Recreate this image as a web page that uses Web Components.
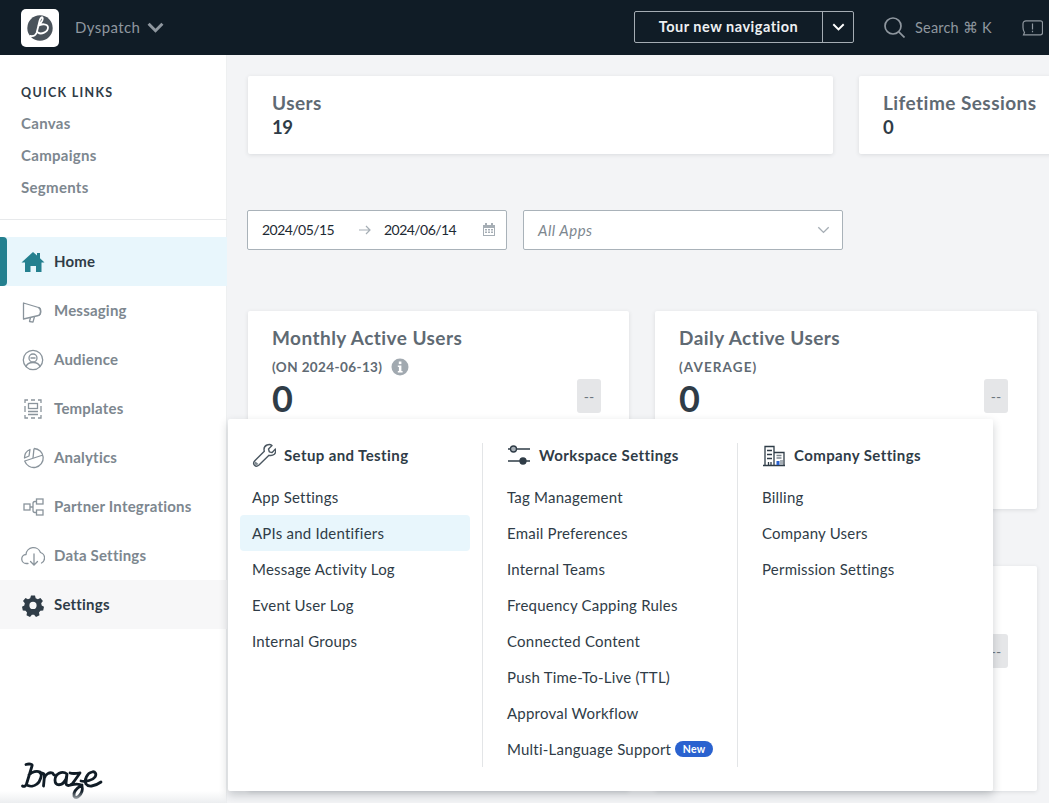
<!DOCTYPE html>
<html lang="en"><head><meta charset="utf-8"><title>Braze</title>
<style>
html,body{margin:0;height:100%;overflow:hidden}
body{font-family:Lato,"Noto Sans",sans-serif;color:#2f3c47;background:#f3f4f6;width:1049px;height:803px;position:relative;display:grid;grid-template-rows:55px 1fr;grid-template-columns:227px 1fr}
bz-topbar{grid-column:1/3}
</style></head><body>
<bz-topbar></bz-topbar>
<bz-sidebar>
  <bz-nav-item icon="home" active>Home</bz-nav-item>
  <bz-nav-item icon="messaging">Messaging</bz-nav-item>
  <bz-nav-item icon="audience">Audience</bz-nav-item>
  <bz-nav-item icon="templates">Templates</bz-nav-item>
  <bz-nav-item icon="analytics">Analytics</bz-nav-item>
  <bz-nav-item icon="partner">Partner Integrations</bz-nav-item>
  <bz-nav-item icon="data">Data Settings</bz-nav-item>
  <bz-nav-item icon="settings" open>Settings</bz-nav-item>
</bz-sidebar>
<bz-dashboard></bz-dashboard>
<bz-settings-menu>
  <bz-menu-col icon="wrench" heading="Setup and Testing">
    <bz-menu-link>App Settings</bz-menu-link>
    <bz-menu-link selected>APIs and Identifiers</bz-menu-link>
    <bz-menu-link>Message Activity Log</bz-menu-link>
    <bz-menu-link>Event User Log</bz-menu-link>
    <bz-menu-link>Internal Groups</bz-menu-link>
  </bz-menu-col>
  <bz-menu-col icon="sliders" heading="Workspace Settings">
    <bz-menu-link>Tag Management</bz-menu-link>
    <bz-menu-link>Email Preferences</bz-menu-link>
    <bz-menu-link>Internal Teams</bz-menu-link>
    <bz-menu-link>Frequency Capping Rules</bz-menu-link>
    <bz-menu-link>Connected Content</bz-menu-link>
    <bz-menu-link>Push Time-To-Live (TTL)</bz-menu-link>
    <bz-menu-link>Approval Workflow</bz-menu-link>
    <bz-menu-link>Multi-Language Support<bz-badge>New</bz-badge></bz-menu-link>
  </bz-menu-col>
  <bz-menu-col icon="company" heading="Company Settings">
    <bz-menu-link>Billing</bz-menu-link>
    <bz-menu-link>Company Users</bz-menu-link>
    <bz-menu-link>Permission Settings</bz-menu-link>
  </bz-menu-col>
</bz-settings-menu>

<script>
const ICONS={
home:'<path d="M.5 12.500 12 2l4 3.600V3h3v5.300l4.500 4.200H20.500V22H15v-6H9.500v6H4V12.500z" fill="#24808f"/>',
messaging:'<g fill="none" stroke="#8a949c" stroke-width="1.300" stroke-linejoin="round"><path d="M2.500 4l15 4.500c3 .8 3 7 0 8l-15 3.500z"/><path d="M17.500 8.500c2.700 1 2.700 7 0 8M9.500 18.500l-1 4 3.500.7 1.500-5.700"/></g>',
audience:'<g fill="none" stroke="#8a949c" stroke-width="1.300"><circle cx="12" cy="12" r="9.700"/><circle cx="12" cy="10" r="4"/><path d="M5 19c1-4 4-4.500 7-4.500s6 .5 7 4.500M9.500 10h5"/></g>',
templates:'<g fill="none" stroke="#8a949c" stroke-width="1.300"><path d="M4 6V3h3M10 3h4M17 3h3v3M4 9v6M20 9v6M4 18v3h3M10 21h4M17 21h3v-3"/><rect x="7.500" y="6.500" width="9" height="5"/><path d="M7 14.500h10M7 17.500h10"/></g>',
analytics:'<g fill="none" stroke="#8a949c" stroke-width="1.300" stroke-linejoin="round"><path d="M13 2.500A9.500 9.500 0 1 1 3.700 15L22 9"/><path d="M13 2.500 12 12"/><path d="M9 3.500 8 10l-4.500 2C3.500 8 5.500 5 9 3.500z"/></g>',
partner:'<g fill="none" stroke="#8a949c" stroke-width="1.300"><rect x="3" y="9" width="6" height="6"/><rect x="15.500" y="4" width="6.500" height="5"/><rect x="15.500" y="15" width="6.500" height="5"/><path d="M9 12h3M15.500 6.500H14a2 2 0 0 0-2 2v7a2 2 0 0 0 2 2h1.500"/></g>',
data:'<g fill="none" stroke="#8a949c" stroke-width="1.300" stroke-linecap="round"><path d="M7 19.500H5.500a4.500 4.500 0 0 1-.5-9 7.500 7.500 0 0 1 14.500-2 5.700 5.700 0 0 1 1 10.500"/><path d="M13 10v10.500M9.500 17.500l3.500 3.500 3.500-3.500"/></g>',
settings:'<path fill-rule="evenodd" d="M10 2.500h4l.7 2.700 2.200 1 2.500-1.300 2.500 3-1.700 2.300.5 2.300 2.300 1.300-.8 3.700-2.800.2-1.400 1.800.5 2.800-3.500 1.600-1.900-2.100h-2.200l-1.900 2.100-3.500-1.600.5-2.800-1.400-1.800-2.800-.2-.8-3.700 2.300-1.300.5-2.300L2 7.900l2.500-3 2.500 1.300 2.200-1zM12 8.800a3.600 3.600 0 1 0 0 7.200 3.600 3.600 0 0 0 0-7.200z" fill="#2f3c47"/>',
wrench:'<path fill="none" stroke="#4b5761" stroke-width="1.400" stroke-linejoin="round" d="M15 2c2-.7 4-.3 5 .5l-3.500 3.500.8 2.800 2.800.8L23.500 6c.6 2.500.2 4-1.200 5.300-1.500 1.300-3.500 1.500-5.300 1L7 22c-1.500 1.300-3.500 1.300-4.500.2-1.200-1.200-1-3 .3-4.400l9.500-9.500c-.8-3 .3-5.300 2.700-6.300z"/><path fill="#7d878f" d="M3.500 18.500l3 2.500c-1.500 1.300-3 1.200-3.800.2-.6-.8-.2-1.900.8-2.700z"/>',
sliders:'<g stroke="#2f3c47" stroke-width="1.300"><path d="M1 6h2.500M9.500 6H23M1 18h12M19 18h4"/><circle cx="6.500" cy="6" r="3" fill="#a6aeb5"/><circle cx="16" cy="18" r="3" fill="#2f3c47"/></g>',
company:'<g fill="none" stroke="#2f3c47" stroke-width="1.300"><path d="M1 22.500h22M3 22V3.500h9V22"/><path d="M12 9.500h10V22"/><path d="M5 7.500h5M5 11.500h5M5 15.500h5"/><path d="M14.500 12.500h5M14.500 15h5" stroke="#7d878f"/><path d="M6.500 22v-3M9 22v-3"/></g><rect x="14.500" y="18" width="3" height="4" fill="#2a62cf"/><rect x="18" y="17" width="3" height="5" fill="#a6aeb5"/>'
};
function def(name,html,setup){
  customElements.define(name,class extends HTMLElement{
    constructor(){super();this.attachShadow({mode:'open'}).innerHTML=html;}
    connectedCallback(){if(setup)setup(this,this.shadowRoot);}
  });
}
const chev=(w,h,c,sw)=>`<svg width="${w}" height="${h}" viewBox="0 0 16 10" fill="none" stroke="${c}" stroke-width="${sw}"><path d="M1.500 1.500 8 8l6.500-6.500"/></svg>`;

def('bz-topbar',`<style>
:host{display:flex;align-items:center;background:#101c26;height:55px;overflow:hidden;font-size:15px;box-sizing:border-box;padding-left:21px}
.logo{width:38px;height:38px;background:#fff;border-radius:5px;display:flex;align-items:center;justify-content:center;flex:none}
.name{margin-left:16px;margin-bottom:1px;color:#8f979f;font-size:15px;letter-spacing:.4px}
.caret{margin-left:7px;display:flex}
.split{margin-left:auto;margin-bottom:1px;display:flex;height:32px;box-sizing:border-box;border:1px solid #a4acb3;border-radius:2px;width:220px;color:#fff}
.tour{flex:1;display:flex;align-items:center;justify-content:center;font-weight:700;font-size:14.500px;letter-spacing:.5px;color:#eef0f2;padding-bottom:1px;box-sizing:border-box}
.more{width:30px;border-left:1px solid #a4acb3;display:flex;align-items:center;justify-content:center}
.search{margin-left:30px;display:flex;align-items:center;color:#8f979f;width:108px;flex:none}
.search span{margin-left:10px;font-size:14.500px;letter-spacing:.2px;white-space:nowrap}
.fb{margin-left:30px;margin-right:6px;display:flex;flex:none;margin-top:1px}
</style>
<div class="logo"><svg width="30" height="30" viewBox="0 0 30 30"><circle cx="15" cy="15" r="12.700" fill="#4a535b"/><path d="M5.500 23c3 .5 5-.5 6-3 1-3 2-8 3-12 .5-2 2-4.500 3-3.500 1 1.500-1 5-4.500 8.500 3-2.500 10-2.500 10 1.500 0 4.500-7 7.500-10 5" fill="none" stroke="#fff" stroke-width="1.800" stroke-linecap="round"/></svg></div>
<div class="name">Dyspatch</div>
<div class="caret">${chev(17,11,'#8f979f',2.800)}</div>
<div class="split"><div class="tour">Tour new navigation</div><div class="more">${chev(13,8,'#fff',2.400)}</div></div>
<div class="search"><svg width="21" height="21" viewBox="0 0 21 21" fill="none" stroke="#8f979f" stroke-width="1.700" style="flex:none"><circle cx="9" cy="9" r="8"/><path d="M14.800 14.800 20.500 20.500"/></svg><span>Search ⌘ K</span></div>
<div class="fb"><svg width="21" height="16" viewBox="0 0 21 16" fill="none" stroke="#8f979f" stroke-width="1.200"><path d="M4 .8h14.500a2 2 0 0 1 2 2v10a2 2 0 0 1-2 2H1.500L2.500 12.500C1.500 11 1 9.500 1 7.500V3.800A3 3 0 0 1 4 .8z"/><path d="M10.500 3.500v6M10.500 10.800v1.400"/></svg></div>`);

def('bz-sidebar',`<style>
:host{display:flex;flex-direction:column;background:#fff;width:227px;height:748px;box-sizing:border-box;position:relative;overflow:hidden;box-shadow:inset -1px 0 0 #eef0f1}
:host::after{content:"";position:absolute;left:0;right:0;bottom:0;height:12px;background:linear-gradient(transparent,#eceef0)}
.quick{height:165px;box-sizing:border-box;padding:30px 21px 0;border-bottom:1px solid #e7e9eb;flex:none}
.h{font-size:12.500px;font-weight:700;letter-spacing:1.300px;color:#2f3c47;height:16px;line-height:16px}
a{display:block;color:#7d878f;font-size:15px;font-weight:700;letter-spacing:.3px;height:32px;line-height:32px}
.h+a{margin-top:6px}
nav{margin-top:17px;display:flex;flex-direction:column}
.brand{margin-top:auto;padding:0 0 3px 21px;height:40px;flex:none}
</style>
<div class="quick"><div class="h">QUICK LINKS</div><a>Canvas</a><a>Campaigns</a><a>Segments</a></div>
<nav><slot></slot></nav>
<div class="brand"><svg width="84" height="40" viewBox="0 0 84 40" fill="none" stroke="#101c26" stroke-width="2.800" stroke-linecap="round" stroke-linejoin="round"><path d="M5 4.500c3-1 7-.5 6 1.500L5.500 24C5 26 3 27 1.500 26M8 15c3-3.500 8-4.500 11-3 3 2 0 10-3 12-3 2.500-7 2.500-9 1.500"/><path d="M19 13c3 0 4.500 1 4.500 3l-1 10M23.500 18c1-4 5-6 8-5 1 .5.500 2 2 2"/><path d="M46 14c-5-4-12 0-12 6 0 6 7 7 11-1l1-5-1 9c0 3 3 3 5 1.500"/><path d="M49 13c3 1 6 .5 10 0-3 4-6 9-9 12 4-1 9-1 11 1 1 4-1 8-3 10-2 2-4 2-5 0-1-4 3-8 8-11"/><path d="M60 21c5 1 12-1 14-4 2-3 0-6-3-5-5 1-8 8-6 12 2 3 8 3 15-2"/></svg></div>`);

def('bz-nav-item',`<style>
:host{display:flex;align-items:center;height:49px;box-sizing:border-box;padding-left:21px;position:relative;font-size:15px;font-weight:700;letter-spacing:.2px;color:#7d878f}
:host([active]){background:#e8f6fc;color:#2f3c47}
:host([active])::before{content:"";position:absolute;left:0;top:0;bottom:0;width:7px;background:#24808f;border-radius:0 4px 4px 0}
:host([open]){background:#f7f7f8;color:#2f3c47}
svg{width:24px;height:24px;margin-right:9px;flex:none}
span{margin-bottom:2px}
</style><svg viewBox="0 0 24 24"></svg><span><slot></slot></span>`,(el,sr)=>{sr.querySelector('svg').innerHTML=ICONS[el.getAttribute('icon')]||'';});

def('bz-card',`<style>
:host{display:block;background:#fff;box-sizing:border-box;padding:15px 24px 0;position:relative;box-shadow:0 1px 4px rgba(40,50,60,.12);border-radius:2px;overflow:hidden;color:#5f6a73}
.t{font-size:19px;font-weight:700;letter-spacing:.45px;line-height:24px;white-space:nowrap}
.s{font-size:13.500px;font-weight:700;letter-spacing:.4px;line-height:18px;margin-top:8px;display:flex;align-items:center;white-space:nowrap}
.n{font-size:36px;font-weight:700;color:#2f3c47;line-height:36px;margin-top:4px}
.d{position:absolute;right:var(--dr,29px);top:68px;width:24px;height:34px;background:#e5e6e8;border-radius:3px;color:#6b757d;font-size:14px;display:flex;align-items:center;justify-content:center}
:host([small]) .n{font-size:18.500px;font-weight:700;line-height:24px;margin-top:0;letter-spacing:-.6px}
</style><div class="t"><slot name="t"></slot></div><div class="s"><slot name="s"></slot></div><div class="n"><slot></slot></div><div class="d"><slot name="d"></slot></div>`,(el,sr)=>{
  if(!el.querySelector('[slot=d]'))sr.querySelector('.d').style.display='none';
  if(!el.querySelector('[slot=s]'))sr.querySelector('.s').style.display='none';
  if(!el.querySelector('[slot=t]'))sr.querySelector('.t').style.visibility='hidden';
});

def('bz-date-filter',`<style>
:host{display:flex;align-items:center;width:260px;height:40px;box-sizing:border-box;background:#fff;border:1px solid #a9b2b9;border-radius:2px;padding:0 11px 1px 14px;font-size:14px;color:#1d2933;letter-spacing:-.55px}
.d{width:74px;white-space:nowrap}
.arr{margin:1px 13px 0 23px;display:flex}
.cal{margin-left:auto;display:flex}
</style><span class="d">2024/05/15</span><span class="arr"><svg width="12" height="10" viewBox="0 0 12 10" fill="none" stroke="#a6aeb5" stroke-width="1.200"><path d="M0 5h11M7 1l4 4-4 4"/></svg></span><span class="d">2024/06/14</span><span class="cal"><svg width="12" height="13" viewBox="0 0 12 13"><path fill="#a6aeb5" d="M2 0h2v2h4V0h2v2h2v11H0V2h2zM1 5v7h10V5z"/><path fill="#a6aeb5" d="M2 6h2v1.500H2zM5 6h2v1.500H5zM8 6h2v1.500H8zM2 8.500h2V10H2zM5 8.500h2V10H5zM8 8.500h2V10H8z"/></svg></span>`);

def('bz-select',`<style>
:host{display:flex;align-items:center;justify-content:space-between;width:320px;height:40px;box-sizing:border-box;background:#fff;border:1px solid #a9b2b9;border-radius:2px;padding:0 12px 1px 14px;font-size:15px;letter-spacing:.5px;font-style:italic;color:#7d878f}
</style><slot></slot>${chev(13,8,'#a6aeb5',1.700)}`);

def('bz-dashboard',`<style>
:host{display:block;padding:21px 0 0 21px;overflow:hidden;height:748px;box-sizing:border-box;width:822px}
.row{display:flex;gap:26px;width:1200px}
.top bz-card{height:78px}
.filters{display:flex;gap:16px;margin:56px 0 0 -1px}
.stats{margin-top:61px}
.stats bz-card{width:382px;height:198px}
.stats bz-card:first-child{width:381px;--dr:28px}
.third{margin-top:57px}
.third bz-card{height:225px}
.ic{display:inline-flex;width:18px;height:18px;margin-left:9px;vertical-align:middle}
</style>
<div class="row top">
<bz-card small style="width:585px"><span slot="t">Users</span>19</bz-card>
<bz-card small style="width:300px"><span slot="t">Lifetime Sessions</span>0</bz-card>
</div>
<div class="filters"><bz-date-filter></bz-date-filter><bz-select>All Apps</bz-select></div>
<div class="row stats">
<bz-card><span slot="t">Monthly Active Users</span><span slot="s" style="display:flex;align-items:center">(ON 2024-06-13)<svg class="ic" viewBox="0 0 18 18"><circle cx="9" cy="9" r="8.500" fill="#a1a9b0"/><rect x="7.800" y="3.500" width="2.600" height="2.600" fill="#fff"/><path d="M6.800 7.500h3.600v5.500h1.200v1.500H6.800V13h1.100V9H6.800z" fill="#fff"/></svg></span>0<span slot="d">--</span></bz-card>
<bz-card><span slot="t">Daily Active Users</span><span slot="s" style="letter-spacing:1.100px">(AVERAGE)</span>0<span slot="d">--</span></bz-card>
</div>
<div class="row stats third">
<bz-card></bz-card>
<bz-card><span slot="d">--</span></bz-card>
</div>`);

def('bz-menu-col',`<style>
:host{display:block;box-sizing:border-box;height:324px;padding-left:24px;border-right:1px solid #e3e5e7}
:host(:last-child){border-right:0}
.h{display:flex;align-items:center;height:24px;margin-bottom:12px;font-size:15px;font-weight:700;letter-spacing:.4px;color:#2f3c47}
.h span{margin-bottom:1px}
.h svg{width:24px;height:24px;margin-right:8px;flex:none}
</style><div class="h"><svg viewBox="0 0 24 24"></svg><span id="t"></span></div><slot></slot>`,(el,sr)=>{
  sr.querySelector('svg').innerHTML=ICONS[el.getAttribute('icon')]||'';
  sr.getElementById('t').textContent=el.getAttribute('heading');
});

def('bz-menu-link',`<style>
:host{display:flex;align-items:center;height:36px;box-sizing:border-box;padding-bottom:1px;font-size:15px;letter-spacing:.22px;color:#2f3c47;white-space:nowrap;position:relative}
:host([selected]){background:#e8f6fc;border-radius:4px;margin:0 12px 0 -12px;padding-left:12px}
</style><slot></slot>`);

def('bz-badge',`<style>
:host{display:inline-flex;align-items:center;justify-content:center;background:#2a62cf;color:#fff;font-size:10.500px;font-weight:700;letter-spacing:.3px;width:38px;height:16px;border-radius:8px;margin-left:4px}
</style><slot></slot>`);

def('bz-settings-menu',`<style>
:host{position:absolute;left:228px;top:419px;width:765px;height:372px;box-sizing:border-box;background:#fff;box-shadow:0 4px 10px rgba(30,40,50,.22);padding-top:24px;display:grid;grid-template-columns:255px 255px 1fr;align-items:start;border-radius:2px}
</style><slot></slot>`);
</script>
</body></html>
